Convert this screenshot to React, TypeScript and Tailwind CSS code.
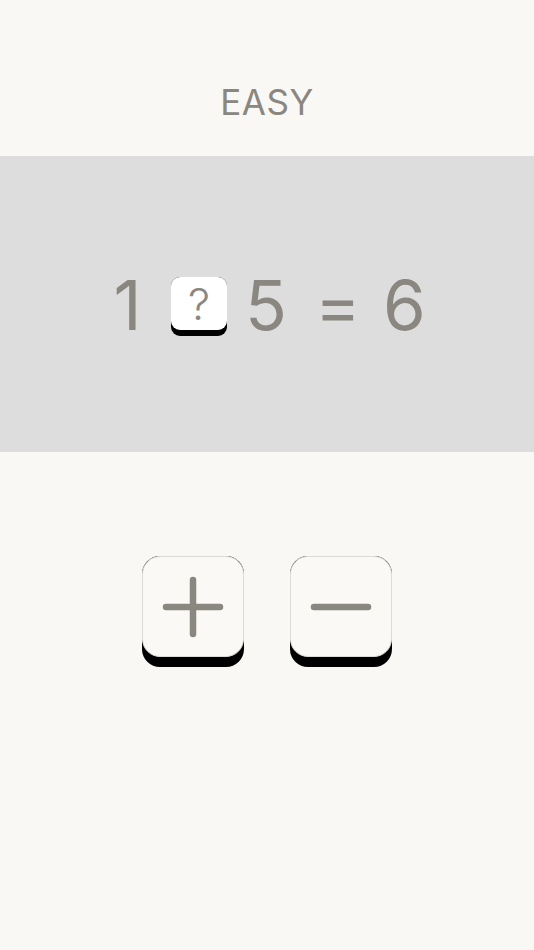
import React from "react";

export default function App() {
  const font = { fontFamily: "Inter, 'Noto Sans', sans-serif" };
  return (
    <div className="w-[534px] h-[950px] bg-[#f9f8f4] flex flex-col" style={font}>
      <div className="h-[156px] flex items-center justify-center pt-[49px]">
        <span className="text-[35px] leading-none tracking-[0.5px] text-[#8a8781]">EASY</span>
      </div>
      <div className="h-[296px] bg-[#dddddd] flex items-center justify-center pt-[2px]">
        <div className="flex items-center text-[69px] leading-none text-[#8a8781]">
          <span className="w-[35px] text-center">1</span>
          <div className="ml-[26px] mt-[3px] w-[56px] h-[59px] rounded-[9px] bg-black flex flex-col">
            <div className="h-[53px] rounded-[9px] bg-white flex items-center justify-center text-[44px] font-light text-[#8a8781]">?</div>
          </div>
          <span className="ml-[18px] w-[41px] text-center">5</span>
          <span className="ml-[29px] w-[40px] text-center">=</span>
          <span className="ml-[28px] w-[41px] text-center">6</span>
        </div>
      </div>
      <div className="flex justify-center gap-[46px] mt-[104px]">
        <button className="w-[102px] h-[111px] rounded-[18px] bg-black flex flex-col p-0">
          <div className="h-[101px] rounded-[18px] bg-[#faf9f5] border border-[#dcdbd6] flex items-center justify-center">
            <svg width="64" height="64" viewBox="0 0 64 64">
              <path d="M32 5 V59 M5 32 H59" stroke="#8a8781" strokeWidth="6.5" strokeLinecap="round" fill="none" />
            </svg>
          </div>
        </button>
        <button className="w-[102px] h-[111px] rounded-[18px] bg-black flex flex-col p-0">
          <div className="h-[101px] rounded-[18px] bg-[#faf9f5] border border-[#dcdbd6] flex items-center justify-center">
            <svg width="64" height="64" viewBox="0 0 64 64">
              <path d="M5 32 H59" stroke="#8a8781" strokeWidth="6.5" strokeLinecap="round" fill="none" />
            </svg>
          </div>
        </button>
      </div>
    </div>
  );
}
